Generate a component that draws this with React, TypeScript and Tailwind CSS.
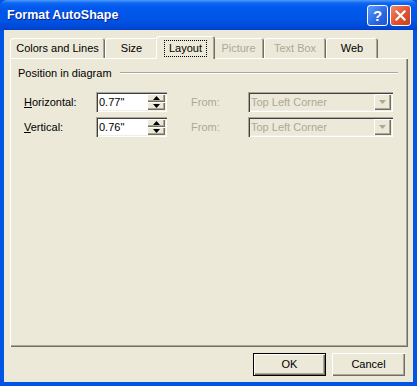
const raised =
  'shadow-[inset_1px_1px_0_#ffffff,inset_-1px_-1px_0_#716f64,inset_-2px_-2px_0_#aca899]';
const sunken =
  'shadow-[inset_1px_1px_0_#aca899,inset_2px_2px_0_#404040,inset_-1px_-1px_0_#ffffff,inset_-2px_-2px_0_#f1efe2]';

function TitleBar() {
  return (
    <div className="h-[30px] shrink-0 flex items-center pl-[7px] pr-[6px] rounded-t-[7px] bg-[linear-gradient(to_bottom,#4d9bff_0%,#1066f0_10%,#0058ee_25%,#0055e5_65%,#0049d8_90%,#003dc4_100%)]">
      <span className="flex-1 text-white font-bold text-[12.5px] [text-shadow:1px_1px_0_#0a1e8c] font-['Liberation_Sans',Arial,sans-serif]">
        Format AutoShape
      </span>
      <div className="flex gap-[2px] pt-[1px]">
        <div className="w-[21px] h-[21px] rounded-[3px] border border-white flex items-center justify-center bg-[linear-gradient(135deg,#5c9cf8,#2a66e4_60%,#1d55d6)]">
          <span className="text-white font-bold text-[15px] leading-none font-['Liberation_Sans',Arial,sans-serif]">?</span>
        </div>
        <div className="w-[21px] h-[21px] rounded-[3px] border border-white flex items-center justify-center bg-[linear-gradient(135deg,#f08a6c,#e0522f_55%,#c8401f)]">
          <svg width="11" height="11" viewBox="0 0 11 11">
            <path d="M1.5 1.5 L9.5 9.5 M9.5 1.5 L1.5 9.5" stroke="#fff" strokeWidth="2.2" strokeLinecap="square" />
          </svg>
        </div>
      </div>
    </div>
  );
}

function Tab({ label, width, selected, disabled }: { label: string; width: number; selected?: boolean; disabled?: boolean }) {
  return (
    <div
      style={{ width }}
      className={
        'flex items-center justify-center rounded-t-[3px] bg-[#ece9d8] shadow-[inset_1px_1px_0_#ffffff,inset_-1px_0_0_#716f64,inset_-2px_0_0_#aca899] ' +
        (selected ? 'h-[23px] -mb-px relative z-10 -mx-[2px]' : 'h-[20px]') +
        (disabled ? ' text-[#aca899]' : ' text-black')
      }
    >
      {selected ? (
        <span className="border border-dotted border-black px-[4px] h-[17px] flex items-center mt-[1px]">{label}</span>
      ) : (
        <span>{label}</span>
      )}
    </div>
  );
}

function Spinner() {
  return (
    <div className="w-[18px] h-[16px] flex flex-col">
      <div className={'flex-1 flex items-center justify-center bg-[#ece9d8] ' + raised}>
        <svg width="7" height="4" viewBox="0 0 7 4"><path d="M0 4 L3.5 0 L7 4 Z" fill="#000" /></svg>
      </div>
      <div className={'flex-1 flex items-center justify-center bg-[#ece9d8] ' + raised}>
        <svg width="7" height="4" viewBox="0 0 7 4"><path d="M0 0 L7 0 L3.5 4 Z" fill="#000" /></svg>
      </div>
    </div>
  );
}

function Row({ label, accel, value }: { label: string; accel: string; value: string }) {
  return (
    <div className="flex items-center h-[20px]">
      <span className="w-[72px]">
        <span className="underline">{accel}</span>
        {label}
      </span>
      <div className={'w-[71px] h-[20px] bg-white flex items-center justify-between pl-[3px] pr-[2px] ' + sunken}>
        <span>{value}</span>
        <Spinner />
      </div>
      <span className="ml-[24px] w-[57px] text-[#aca899]">From:</span>
      <div className={'w-[145px] h-[20px] bg-[#ece9d8] flex items-center justify-between pl-[3px] pr-[2px] ' + sunken}>
        <span className="text-[#aca899]">Top Left Corner</span>
        <div className={'w-[17px] h-[16px] flex items-center justify-center ' + raised}>
          <svg width="7" height="4" viewBox="0 0 7 4"><path d="M0 0 L7 0 L3.5 4 Z" fill="#aca899" /></svg>
        </div>
      </div>
    </div>
  );
}

function Button({ label, isDefault }: { label: string; isDefault?: boolean }) {
  return (
    <div
      className={
        'w-[73px] h-[23px] flex items-center justify-center bg-[#ece9d8] ' +
        (isDefault
          ? 'border border-black shadow-[inset_1px_1px_0_#ffffff,inset_-1px_-1px_0_#716f64,inset_-2px_-2px_0_#aca899]'
          : raised)
      }
    >
      {label}
    </div>
  );
}

export default function App() {
  return (
    <div className="w-[417px] h-[386px] flex flex-col bg-[#0055e5] overflow-hidden text-[11px] text-black font-['Liberation_Sans',Arial,sans-serif]">
      <TitleBar />
      <div className="flex-1 mx-[4px] mb-[4px] bg-[#ece9d8] flex flex-col pl-[6px] pr-[5px] pt-[6px]">
        <div className="flex items-end h-[22px]">
          <Tab label="Colors and Lines" width={95} />
          <Tab label="Size" width={53} />
          <Tab label="Layout" width={59} selected />
          <Tab label="Picture" width={51} disabled />
          <Tab label="Text Box" width={62} disabled />
          <Tab label="Web" width={52} />
        </div>
        <div className={'h-[289px] flex flex-col pl-[8px] pr-[10px] pt-[8px] ' + raised}>
          <div className="flex items-center gap-[8px] h-[14px]">
            <span>Position in diagram</span>
            <div className="flex-1 h-[2px] border-t border-[#aca899] border-b border-b-white" />
          </div>
          <div className="flex flex-col gap-[5px] mt-[12px] pl-[6px]">
            <Row accel="H" label="orizontal:" value={'0.77"'} />
            <Row accel="V" label="ertical:" value={'0.76"'} />
          </div>
        </div>
        <div className="flex justify-end gap-[6px] pr-[3px] mt-[6px]">
          <Button label="OK" isDefault />
          <Button label="Cancel" />
        </div>
      </div>
    </div>
  );
}
